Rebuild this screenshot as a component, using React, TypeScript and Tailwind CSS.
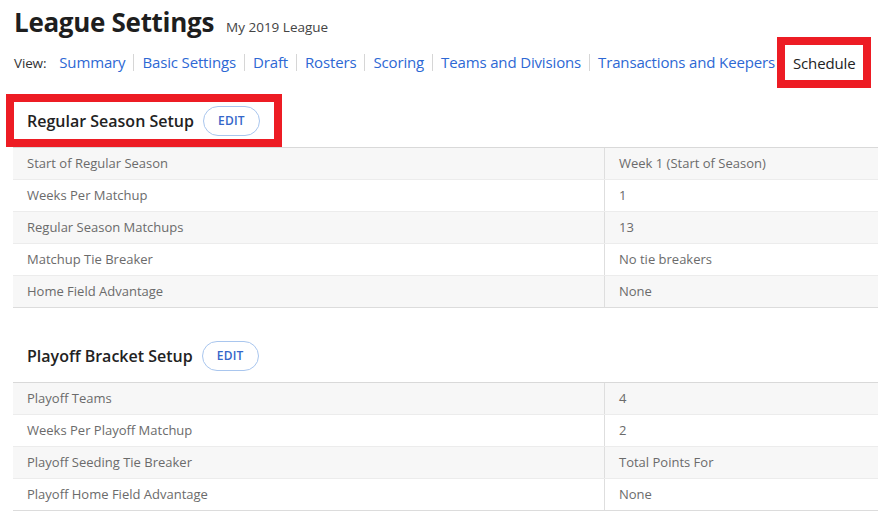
import React from 'react';

const navLinks = [
  'Summary',
  'Basic Settings',
  'Draft',
  'Rosters',
  'Scoring',
  'Teams and Divisions',
  'Transactions and Keepers',
];

const regularSeason = [
  ['Start of Regular Season', 'Week 1 (Start of Season)'],
  ['Weeks Per Matchup', '1'],
  ['Regular Season Matchups', '13'],
  ['Matchup Tie Breaker', 'No tie breakers'],
  ['Home Field Advantage', 'None'],
];

const playoffBracket = [
  ['Playoff Teams', '4'],
  ['Weeks Per Playoff Matchup', '2'],
  ['Playoff Seeding Tie Breaker', 'Total Points For'],
  ['Playoff Home Field Advantage', 'None'],
];

function EditButton() {
  return (
    <button className="h-[30px] w-[57px] shrink-0 rounded-full border border-[#a9c6ee] bg-white text-[12px] font-semibold text-[#3566c9] tracking-[0.2px]">
      EDIT
    </button>
  );
}

function SettingsTable({ rows }: { rows: string[][] }) {
  return (
    <div className="ml-[13px] border-b border-[#dcdcdc]">
      {rows.map(([label, value], i) => (
        <div
          key={label}
          className={`flex h-[32px] border-t ${i === 0 ? 'border-[#d9d9d9]' : 'border-[#ececec]'} ${
            i % 2 === 0 ? 'bg-[#f7f7f7]' : 'bg-white'
          }`}
        >
          <div className="flex w-[592px] items-center border-r border-[#dedede] pl-[14px]">{label}</div>
          <div className="flex flex-1 items-center pl-[14px]">{value}</div>
        </div>
      ))}
    </div>
  );
}

export default function App() {
  return (
    <div
      className="h-[513px] w-[878px] overflow-hidden bg-white text-[13px] text-[#6b6b6b]"
      style={{ fontFamily: '"Open Sans", "Noto Sans", sans-serif' }}
    >
      <div className="flex items-baseline pl-[14px] pt-[8px]">
        <h1 className="text-[26px] font-bold leading-[29px] tracking-[-0.3px] text-[#1e1e1e]">League Settings</h1>
        <span className="ml-[12px] text-[13.5px] text-[#444]">My 2019 League</span>
      </div>

      <div className="flex h-[51px] items-center whitespace-nowrap pl-[14px] text-[15px] tracking-[-0.15px]">
        <span className="mr-[5px] shrink-0 text-[13.5px] text-[#333]">View:</span>
        {navLinks.map((link, i) => (
          <span
            key={link}
            className={`shrink-0 pl-[8px] pr-[8px] leading-[17px] text-[#2d68d4] ${i > 0 ? 'border-l border-[#d6d6d6]' : ''}`}
          >
            {link}
          </span>
        ))}
        <div className="ml-[-6px] flex h-[51px] shrink-0 items-center border-[8px] border-[#ed1c24] px-[8px] text-[#222]">
          Schedule
        </div>
      </div>

      <div className="mt-[6px] ml-[6px] inline-flex h-[53px] items-center gap-[9px] border-[8px] border-[#ed1c24] pl-[13px] pr-[14px]">
        <h2 className="text-[16px] font-semibold text-[#222]">Regular Season Setup</h2>
        <EditButton />
      </div>
      <SettingsTable rows={regularSeason} />

      <div className="mt-[29px] mb-[8px] flex h-[37px] items-center gap-[9px] pl-[27px]">
        <h2 className="text-[16px] font-semibold text-[#222]">Playoff Bracket Setup</h2>
        <EditButton />
      </div>
      <SettingsTable rows={playoffBracket} />
    </div>
  );
}
